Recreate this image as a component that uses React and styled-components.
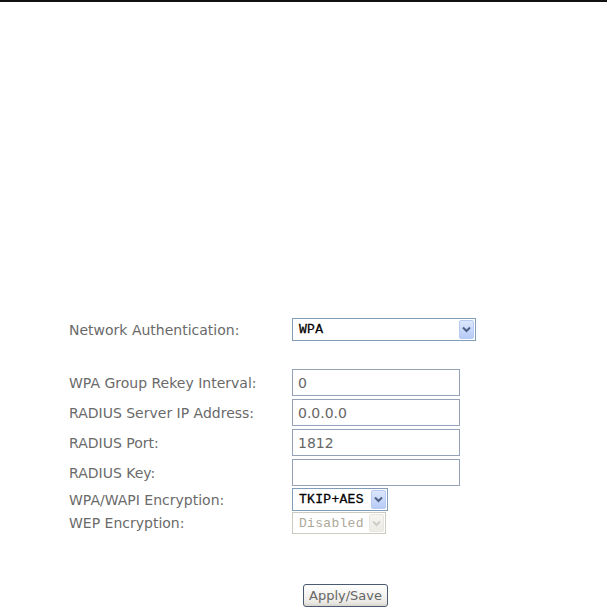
import React from 'react';
import styled, { createGlobalStyle } from 'styled-components';

const GlobalStyle = createGlobalStyle`
  body {
    margin: 0;
    background: #ffffff;
    font-family: 'DejaVu Sans', Verdana, sans-serif;
  }
`;

const TopRule = styled.div`
  height: 2px;
  background-color: #111;
`;

const Page = styled.div`
  padding: 316px 0 0 69px;
`;

const Row = styled.div`
  display: grid;
  grid-template-columns: 223px auto;
  align-items: center;
  margin-top: ${(p) => p.gap || 0}px;
`;

const Label = styled.span`
  font-size: 14px;
  color: #6a6a6a;
  white-space: nowrap;
`;

const TextInput = styled.input`
  box-sizing: border-box;
  width: 168px;
  height: 27px;
  padding: 0 5px;
  border: 1px solid #93a2b8;
  font-family: 'DejaVu Sans', Verdana, sans-serif;
  font-size: 14px;
  color: #666;
  background: #fff;
  outline: none;
`;

const Select = styled.div`
  box-sizing: border-box;
  display: flex;
  align-items: center;
  width: ${(p) => p.width}px;
  height: ${(p) => p.height || 23}px;
  padding: 1px;
  border: 1px solid ${(p) => (p.disabled ? '#cdcbbf' : '#7f9db9')};
  background: #fff;
`;

const SelectText = styled.span`
  flex: 1;
  padding-left: 5px;
  font-family: 'Liberation Mono', 'Courier New', monospace;
  font-size: 13px;
  letter-spacing: 0.3px;
  color: ${(p) => (p.disabled ? '#aca899' : '#000')};
  ${(p) => (p.disabled ? '' : '-webkit-text-stroke: 0.3px #000;')}
`;

const ArrowBox = styled.span`
  display: flex;
  align-items: center;
  justify-content: center;
  width: 15px;
  height: 100%;
  border: 1px solid ${(p) => (p.disabled ? '#e8e6de' : '#b9cbf3')};
  border-radius: 2px;
  box-sizing: border-box;
  background: ${(p) =>
    p.disabled
      ? 'linear-gradient(#f6f5f1, #ecebe4)'
      : 'linear-gradient(#dce7fd, #b6cbf7)'};
`;

const ButtonRow = styled.div`
  display: grid;
  grid-template-columns: 234px auto;
  margin-top: 50px;
`;

const SaveButton = styled.button`
  grid-column: 2;
  width: 85px;
  height: 23px;
  border: 1px solid #4a5a72;
  border-radius: 3px;
  background: linear-gradient(#ffffff, #ecebe6 80%, #d8d6cd);
  font-family: 'DejaVu Sans', Verdana, sans-serif;
  font-size: 13px;
  color: #666;
  padding: 0;
  cursor: pointer;
`;

const Chevron = ({ disabled }) => (
  <svg width="9" height="7" viewBox="0 0 9 7">
    <path
      d="M1 1.5 L4.5 5 L8 1.5"
      fill="none"
      stroke={disabled ? '#cfcdc3' : '#4d6185'}
      strokeWidth="2"
    />
  </svg>
);

const Dropdown = ({ value, width, height, disabled }) => (
  <Select width={width} height={height} disabled={disabled}>
    <SelectText disabled={disabled}>{value}</SelectText>
    <ArrowBox disabled={disabled}>
      <Chevron disabled={disabled} />
    </ArrowBox>
  </Select>
);

const fields = [
  { label: 'WPA Group Rekey Interval:', value: '0' },
  { label: 'RADIUS Server IP Address:', value: '0.0.0.0' },
  { label: 'RADIUS Port:', value: '1812' },
  { label: 'RADIUS Key:', value: '' },
];

export default function App() {
  return (
    <>
      <GlobalStyle />
      <TopRule />
      <Page>
        <Row>
          <Label>Network Authentication:</Label>
          <Dropdown value="WPA" width={184} />
        </Row>
        {fields.map((f, i) => (
          <Row key={f.label} gap={i === 0 ? 28 : 3}>
            <Label>{f.label}</Label>
            <TextInput type="text" defaultValue={f.value} />
          </Row>
        ))}
        <Row gap={2}>
          <Label>WPA/WAPI Encryption:</Label>
          <Dropdown value="TKIP+AES" width={96} />
        </Row>
        <Row gap={1}>
          <Label>WEP Encryption:</Label>
          <Dropdown value="Disabled" width={94} height={22} disabled />
        </Row>
        <ButtonRow>
          <SaveButton type="button">Apply/Save</SaveButton>
        </ButtonRow>
      </Page>
    </>
  );
}
